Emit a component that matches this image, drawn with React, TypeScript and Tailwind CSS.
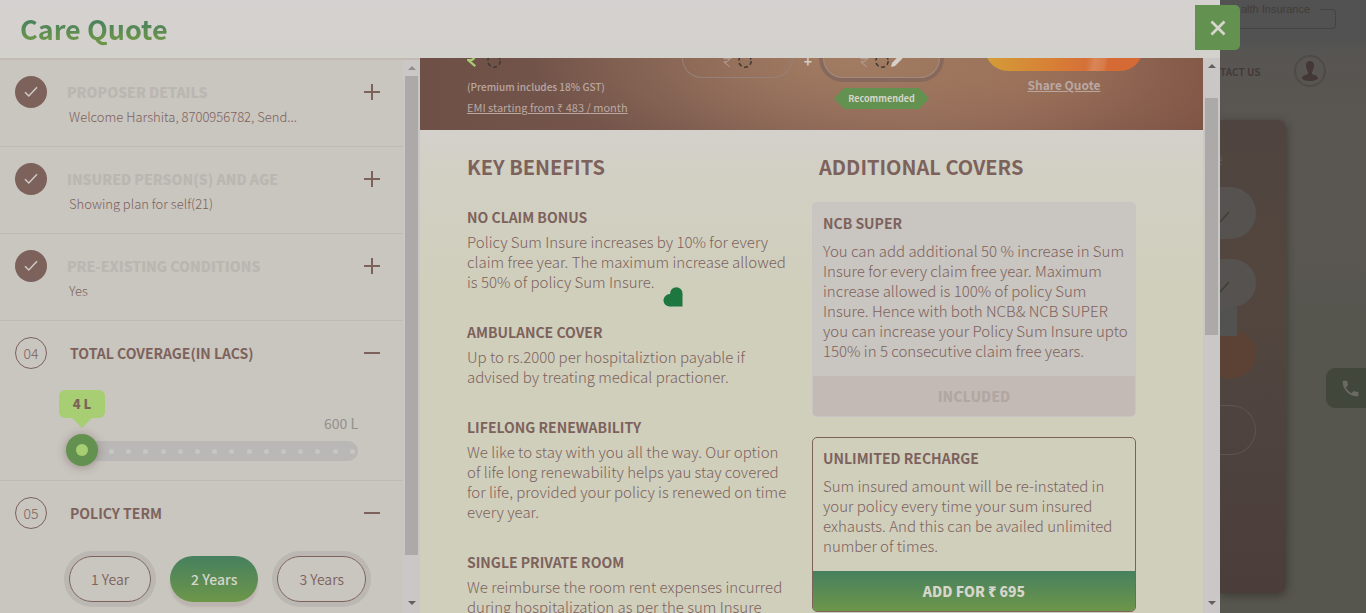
import React, { useState } from "react";

const BENEFITS = [
  {
    title: "NO CLAIM BONUS",
    text: "Policy Sum Insure increases by 10% for every claim free year. The maximum increase allowed is 50% of policy Sum Insure.",
  },
  {
    title: "AMBULANCE COVER",
    text: "Up to rs.2000 per hospitaliztion payable if advised by treating medical practioner.",
  },
  {
    title: "LIFELONG RENEWABILITY",
    text: "We like to stay with you all the way. Our option of life long renewability helps yau stay covered for life, provided your policy is renewed on time every year.",
  },
  {
    title: "SINGLE PRIVATE ROOM",
    text: "We reimburse the room rent expenses incurred during hospitalization as per the sum Insure",
  },
];

const DONE_STEPS = [
  { title: "PROPOSER DETAILS", text: "Welcome Harshita, 8700956782, Send..." },
  { title: "INSURED PERSON(S) AND AGE", text: "Showing plan for self(21)" },
  { title: "PRE-EXISTING CONDITIONS", text: "Yes" },
];

function Arrow({ down, faded }: { down?: boolean; faded?: boolean }) {
  return (
    <svg width="8" height="4" viewBox="0 0 8 4" className={faded ? "text-[#8f8e8d]" : "text-[#605f5e]"} aria-hidden="true">
      <path d={down ? "M0 0h8L4 4z" : "M0 4h8L4 0z"} fill="currentColor" />
    </svg>
  );
}

function ScrollTrack({ children, faded }: { children: React.ReactNode; faded?: boolean }) {
  return (
    <div className="flex w-[17px] shrink-0 flex-col items-center bg-[#c9c8c6]" aria-hidden="true">
      <div className="flex h-4 shrink-0 items-center">
        <Arrow faded={faded} />
      </div>
      <div className="flex w-[13px] flex-1 flex-col">{children}</div>
      <div className="flex h-[21px] shrink-0 items-center">
        <Arrow down />
      </div>
    </div>
  );
}

function Toggle({ open, label }: { open?: boolean; label: string }) {
  return (
    <button type="button" aria-label={label} className="flex size-8 items-center justify-center">
      <svg width="16" height="16" viewBox="0 0 16 16" fill="#7d625c" aria-hidden="true">
        <rect x="0" y="7" width="16" height="2" />
        {!open && <rect x="7" y="0" width="2" height="16" />}
      </svg>
    </button>
  );
}

function Spinner() {
  return (
    <svg width="14" height="14" viewBox="0 0 14 14" fill="none" aria-hidden="true">
      <circle cx="7" cy="7" r="6.2" stroke="#3e3835" strokeWidth="1.5" strokeDasharray="3.9 2.6" />
    </svg>
  );
}

function Rupee({ className }: { className: string }) {
  return (
    <svg viewBox="0 0 10 14" fill="none" stroke="currentColor" className={className} aria-hidden="true">
      <path d="M0.5 1h9M0.5 4.500h9M1 1h2c5 0 5 7 0 7H1l6.500 5.500" />
    </svg>
  );
}

function OpenHeader({ num, title }: { num: string; title: string }) {
  return (
    <div className="flex items-center">
      <span className="flex size-8 items-center justify-center rounded-full border border-[#7d625c] text-sm font-light">{num}</span>
      <h3 className="ml-[23px] flex-1 text-sm leading-5 font-bold">{title}</h3>
      <Toggle open label={`Collapse ${title}`} />
    </div>
  );
}

function Steps() {
  const [term, setTerm] = useState("2 Years");
  const [lacs, setLacs] = useState(4);
  return (
    <aside className="flex w-[420px] shrink-0 overflow-hidden border-t-2 border-[#c3bab5] bg-[#c9c5bf]">
      <div className="min-w-0 flex-1">
        {DONE_STEPS.map((s) => (
          <section key={s.title} className="flex h-[87px] border-b border-[#c1b9b4] pt-4 pr-[15px] pl-[15px]">
            <span className="flex size-8 shrink-0 items-center justify-center rounded-full bg-[#7d625c]">
              <svg width="14" height="12" viewBox="0 0 14 12" fill="none" stroke="#cfcac5" strokeWidth="1.5" aria-hidden="true">
                <path d="M1 6.2 4.8 10 13 1.2" />
              </svg>
            </span>
            <div className="ml-5 min-w-0 flex-1">
              <h3 className="text-sm leading-8 font-black text-[#bab6b1]">{s.title}</h3>
              <p className="ml-0.5 text-[13px] leading-[18px] font-light">{s.text}</p>
            </div>
            <Toggle label={`Expand ${s.title}`} />
          </section>
        ))}
        <section className="h-40 border-b border-[#c1b9b4] px-[15px] pt-4">
          <OpenHeader num="04" title="TOTAL COVERAGE(IN LACS)" />
          <div className="mt-[21px] mr-[30px] ml-11 flex items-start justify-between">
            <output className="relative flex h-7 w-[46px] items-center justify-center rounded-md bg-[#a8ce74] text-[13px] font-black">
              {lacs} L
              <svg width="20" height="10" viewBox="0 0 20 10" className="absolute top-7 left-[13px]" aria-hidden="true">
                <path d="M0 0h20L10 10z" fill="#a8ce74" />
              </svg>
            </output>
            <span className="mt-6 text-sm leading-[18px] text-[#94908c]">600 L</span>
          </div>
          <label className="relative mt-[9px] mr-[30px] ml-[67px] flex h-5 items-center justify-between rounded-full bg-[#b9b8b6] pr-[3px] pl-[27px]">
            {Array.from({ length: 15 }, (_, i) => (
              <span key={i} className="size-[5px] rounded-full bg-[#c8c6c3]" />
            ))}
            <span className="absolute top-[-7px] left-[-16px] flex size-8 items-center justify-center rounded-full bg-[#63914f] shadow-[0_1px_10px_rgba(90,70,65,0.45)]">
              <span className="size-3 rounded-full bg-[#a8ce74]" />
            </span>
            <input
              type="range"
              min={4}
              max={600}
              value={lacs}
              onChange={(e) => setLacs(Number(e.target.value))}
              aria-label="Total coverage in lacs"
              className="absolute inset-0 w-full cursor-pointer opacity-0"
            />
          </label>
        </section>
        <section className="px-[15px] pt-4">
          <OpenHeader num="05" title="POLICY TERM" />
          <div className="mt-[27px] ml-[54px] flex gap-[19px] text-sm">
            {["1 Year", "2 Years", "3 Years"].map((t) => (
              <label
                key={t}
                className={
                  t === term
                    ? "flex h-[46px] cursor-pointer items-center rounded-full bg-linear-to-b from-[#47805e] to-[#6c9648] px-[21px] font-medium text-[#d6d6cc] shadow-[0_5px_2px_rgba(125,98,92,0.16)]"
                    : "flex h-[46px] cursor-pointer items-center rounded-full border border-[#7d625c] px-[21px] font-[350] shadow-[0_0_0_5px_#bbb7b2]"
                }
              >
                <input type="radio" name="term" className="sr-only" checked={t === term} onChange={() => setTerm(t)} />
                {t}
              </label>
            ))}
          </div>
        </section>
      </div>
      <ScrollTrack faded>
        <div className="h-[479px] bg-[#abaaa8]" />
      </ScrollTrack>
    </aside>
  );
}

function Banner() {
  return (
    <div className="flex h-[72px] shrink-0 items-start overflow-hidden bg-[radial-gradient(ellipse_320px_110px_at_55%_0%,#a27c62,transparent),radial-gradient(ellipse_340px_130px_at_75%_20%,#986b54,transparent),linear-gradient(90deg,#6e5046,#7b5a50_45%,#80605a_65%,#754c40)] pl-[47px] text-[#b9a8a1]">
      <div className="w-[215px]">
        <div className="flex h-5 items-start gap-[9px] text-[#a8ce74]">
          <Rupee className="mt-[-8px] h-[18px] w-[11px] stroke-2" />
          <span className="-mt-1"><Spinner /></span>
        </div>
        <p className="text-[10px] leading-[18px] font-medium">(Premium includes 18% GST)</p>
        <a href="#emi" className="block text-[11px] leading-[22px] underline">EMI starting from ₹ 483 / month</a>
      </div>
      <div className="flex h-5 w-[111px] items-start justify-center gap-[6px] rounded-b-[20px] border border-t-0 border-[#978078]">
        <Rupee className="mt-[-4px] h-[14px] w-[9px]" />
        <span className="-mt-1"><Spinner /></span>
      </div>
      <span className="w-[30px] text-center text-sm leading-[6px] font-bold text-[#d6ccc6]">+</span>
      <div className="flex w-[117px] flex-col items-center">
        <div className="flex h-5 w-full items-start justify-center gap-[6px] rounded-b-[20px] border border-t-0 border-[#a08a80] shadow-[0_0_0_4px_rgba(120,95,90,0.6)]">
          <Rupee className="mt-[-4px] h-[14px] w-[9px]" />
          <span className="-mt-1"><Spinner /></span>
          <svg width="12" height="12" viewBox="0 0 12 12" fill="#d6d0ca" className="mt-[-3px] -ml-1" aria-label="Edit">
            <path d="M0 12l1-4 7-7.500L11.500 3.500 4 11z" />
          </svg>
        </div>
        <span className="mt-[10px] flex items-center">
          <svg width="10" height="21" viewBox="0 0 10 21" fill="#63914f" aria-hidden="true"><path d="M10 0v21L0 10.500z" /></svg>
          <span className="h-[21px] bg-[#63914f] px-1 text-[9px] leading-[21px] font-bold text-[#d6d6cc]">Recommended</span>
          <svg width="10" height="21" viewBox="0 0 10 21" fill="#63914f" aria-hidden="true"><path d="M0 0v21l10-10.500z" /></svg>
        </span>
      </div>
      <div className="ml-[45px] flex w-[158px] flex-col items-center">
        <div className="h-[13px] w-full overflow-hidden">
          <div className="-mt-[33px] h-[46px] rounded-full bg-[linear-gradient(100deg,#d3a037,#d87f36_45%,#d57038_65%,#d98657_70%,#d77a48_76%,#d56a35_78%)]" />
        </div>
        <a href="#share" className="mt-1 text-xs leading-5 font-bold underline">Share Quote</a>
      </div>
    </div>
  );
}

function Details() {
  return (
    <main className="flex min-w-0 flex-1 overflow-hidden">
      <div className="relative flex min-w-0 flex-1 flex-col overflow-hidden bg-[linear-gradient(180deg,#d4d1cc_0px,#d4d1cc_72px,#d2d0c4_110px,#d0cfbc_230px,#d0cfbc)]">
        <Banner />
        <div className="grid grid-cols-[1fr_324px] pt-[25px] pr-[67px] pl-[47px]">
          <section>
            <h2 className="text-xl leading-6 font-bold">KEY BENEFITS</h2>
            <div className="mt-7 flex flex-col gap-[30px] pr-6">
              {BENEFITS.map((b) => (
                <article key={b.title} className="text-sm leading-5">
                  <h3 className="mb-[5px] font-bold">{b.title}</h3>
                  <p className="text-[15px] font-light">{b.text}</p>
                </article>
              ))}
            </div>
          </section>
          <section>
            <h2 className="ml-[7px] text-xl leading-6 font-bold">ADDITIONAL COVERS</h2>
            <article className="mt-[23px] overflow-hidden rounded-[5px] border border-[#c8c4c1] bg-[#c9c5c0] text-sm leading-5">
              <div className="pt-[10px] pr-1 pb-[15px] pl-[10px]">
                <h3 className="mb-2 font-bold">NCB SUPER</h3>
                <p className="text-[15px] font-light">
                  You can add additional 50 % increase in Sum Insure for every claim free year. Maximum increase allowed
                  is 100% of policy Sum Insure. Hence with both NCB&amp; NCB SUPER you can increase your Policy Sum Insure
                  upto 150% in 5 consecutive claim free years.
                </p>
              </div>
              <button type="button" disabled className="h-10 w-full bg-[#c4bab5] font-black text-[#b1a7a2]">INCLUDED</button>
            </article>
            <article className="mt-5 overflow-hidden rounded-[5px] border border-[#7d625c] text-sm leading-5">
              <div className="pt-[10px] pr-1 pb-[15px] pl-[10px]">
                <h3 className="mb-2 font-bold">UNLIMITED RECHARGE</h3>
                <p className="text-[15px] font-light">
                  Sum insured amount will be re-instated in your policy every time your sum insured exhausts. And this can
                  be availed unlimited number of times.
                </p>
              </div>
              <button type="button" className="h-10 w-full bg-linear-to-b from-[#47805e] to-[#6c9648] font-black text-[#d6d6cc]">
                ADD FOR ₹ 695
              </button>
            </article>
          </section>
        </div>
        <svg width="20" height="20" viewBox="0 0 20 20" fill="#1d773f" className="absolute top-[229px] left-[243px]" aria-hidden="true">
          <circle cx="13.300" cy="6.500" r="6.200" />
          <circle cx="6.700" cy="13.300" r="6.200" />
          <path d="M7 7h12.500v12.500H7z" />
        </svg>
      </div>
      <ScrollTrack>
        <div className="mt-6 h-[237px] bg-[#abaaa8]" />
      </ScrollTrack>
    </main>
  );
}

function PageBehind() {
  return (
    <div className="relative flex w-[146px] shrink-0 flex-col overflow-hidden bg-[linear-gradient(180deg,#525252_0px,#525252_42px,#575552_50px,#5a5651_120px,#5a5752_240px,#56554e_330px,#56554e)] text-[#443b39]">
      <fieldset className="mr-[30px] flex h-[29px] rounded-r-[4px] border border-l-0 border-[#464443] font-['Liberation_Sans',sans-serif] text-[11px]">
        <legend className="pr-[10px] pl-[21px] leading-[19px] whitespace-nowrap">alth Insurance</legend>
      </fieldset>
      <nav className="mt-[26px] flex h-8 items-center">
        <a href="#contact" className="text-[10px] font-bold">TACT US</a>
        <a href="#account" aria-label="Account" className="ml-[33px] flex size-8 items-center justify-center rounded-full border-2 border-[#4f4a48]">
          <svg width="18" height="20" viewBox="0 0 18 20" fill="#443836" aria-hidden="true">
            <path d="M9 0c2.800 0 4.200 2 4 4.800-.2 3-1.500 5.200-2 6.200v2.200c3 .6 6 1.800 6 4 0 1.600-4 2.800-8 2.800s-8-1.200-8-2.800c0-2.200 3-3.400 6-4V11c-.5-1-1.800-3.200-2-6.200C4.800 2 6.200 0 9 0z" />
          </svg>
        </a>
      </nav>
      <div className="mt-[33px] mr-20 flex h-[473px] flex-col rounded-r-[8px] bg-[linear-gradient(180deg,#4f443f,#53463e_35%,#4e433f_65%,#4b3d3a)] pr-[30px] shadow-[0_2px_8px_rgba(40,35,32,0.6)]">
        <span className="mt-[26px] -ml-1.5 text-base leading-6 text-[#5c5552]">e</span>
        {[0, 1].map((i) => (
          <div
            key={i}
            className={
              i === 0
                ? "mt-[17px] flex h-[52px] items-center rounded-r-full bg-[#555250]"
                : "mt-5 flex h-12 items-center rounded-r-full bg-[#555250]"
            }
          >
            <svg width="10" height="12" viewBox="0 0 10 12" stroke="#3a4034" strokeWidth="1.500" className="mt-2" aria-hidden="true">
              <path d="M0 11 9 1" />
            </svg>
          </div>
        ))}
        <div className="h-[71px] overflow-hidden rounded-br-[24px]">
          <div className="mt-[23px] h-12 rounded-r-full bg-[#5c4234]">
            <div className="-translate-y-[23px] h-[29px] w-[17px] bg-[#525250]" />
          </div>
        </div>
        <div className="mt-[27px] h-[50px] rounded-r-full border border-l-0 border-[#5c5552]" />
      </div>
      <a href="#call" aria-label="Call" className="absolute top-[368px] right-0 flex h-10 w-10 items-center justify-center rounded-l-[9px] bg-[#41473a]">
        <svg width="21" height="21" viewBox="0 0 24 24" fill="#6b6a63" className="ml-2" aria-hidden="true">
          <path d="M6.600 10.800c1.400 2.800 3.800 5.100 6.600 6.600l2.200-2.200c.3-.3.700-.4 1-.2 1.100.4 2.300.6 3.600.6.600 0 1 .4 1 1V20c0 .6-.4 1-1 1C10.600 21 3 13.400 3 4c0-.6.500-1 1-1h3.500c.6 0 1 .5 1 1 0 1.300.2 2.500.6 3.600.1.300 0 .7-.2 1z" />
        </svg>
      </a>
    </div>
  );
}

export default function App() {
  return (
    <div className="flex h-screen overflow-hidden font-['Noto_Sans_CJK_SC','Noto_Sans',sans-serif] text-[#7d625c]">
      <div role="dialog" aria-label="Care Quote" className="relative z-10 flex min-w-0 flex-1 flex-col bg-[#d3d0cc]">
        <header className="flex h-[58px] shrink-0 items-center bg-linear-to-b from-[#d5d1d0] to-[#d3d1cc] pl-5">
          <h1 className="bg-linear-to-b from-[#47805e] from-25% to-[#6c9648] to-80% bg-clip-text text-[27px] leading-10 font-bold text-transparent">
            Care Quote
          </h1>
        </header>
        <div className="flex min-h-0 flex-1">
          <Steps />
          <Details />
        </div>
        <button
          type="button"
          aria-label="Close"
          className="absolute top-[5px] -right-5 flex size-[45px] items-center justify-center rounded-r-[5px] bg-[#63914f]"
        >
          <svg width="16" height="16" viewBox="0 0 16 16" stroke="#d6d6cc" strokeWidth="2.800" aria-hidden="true">
            <path d="M1.500 1.500l13 13M14.500 1.500l-13 13" />
          </svg>
        </button>
      </div>
      <PageBehind />
    </div>
  );
}
